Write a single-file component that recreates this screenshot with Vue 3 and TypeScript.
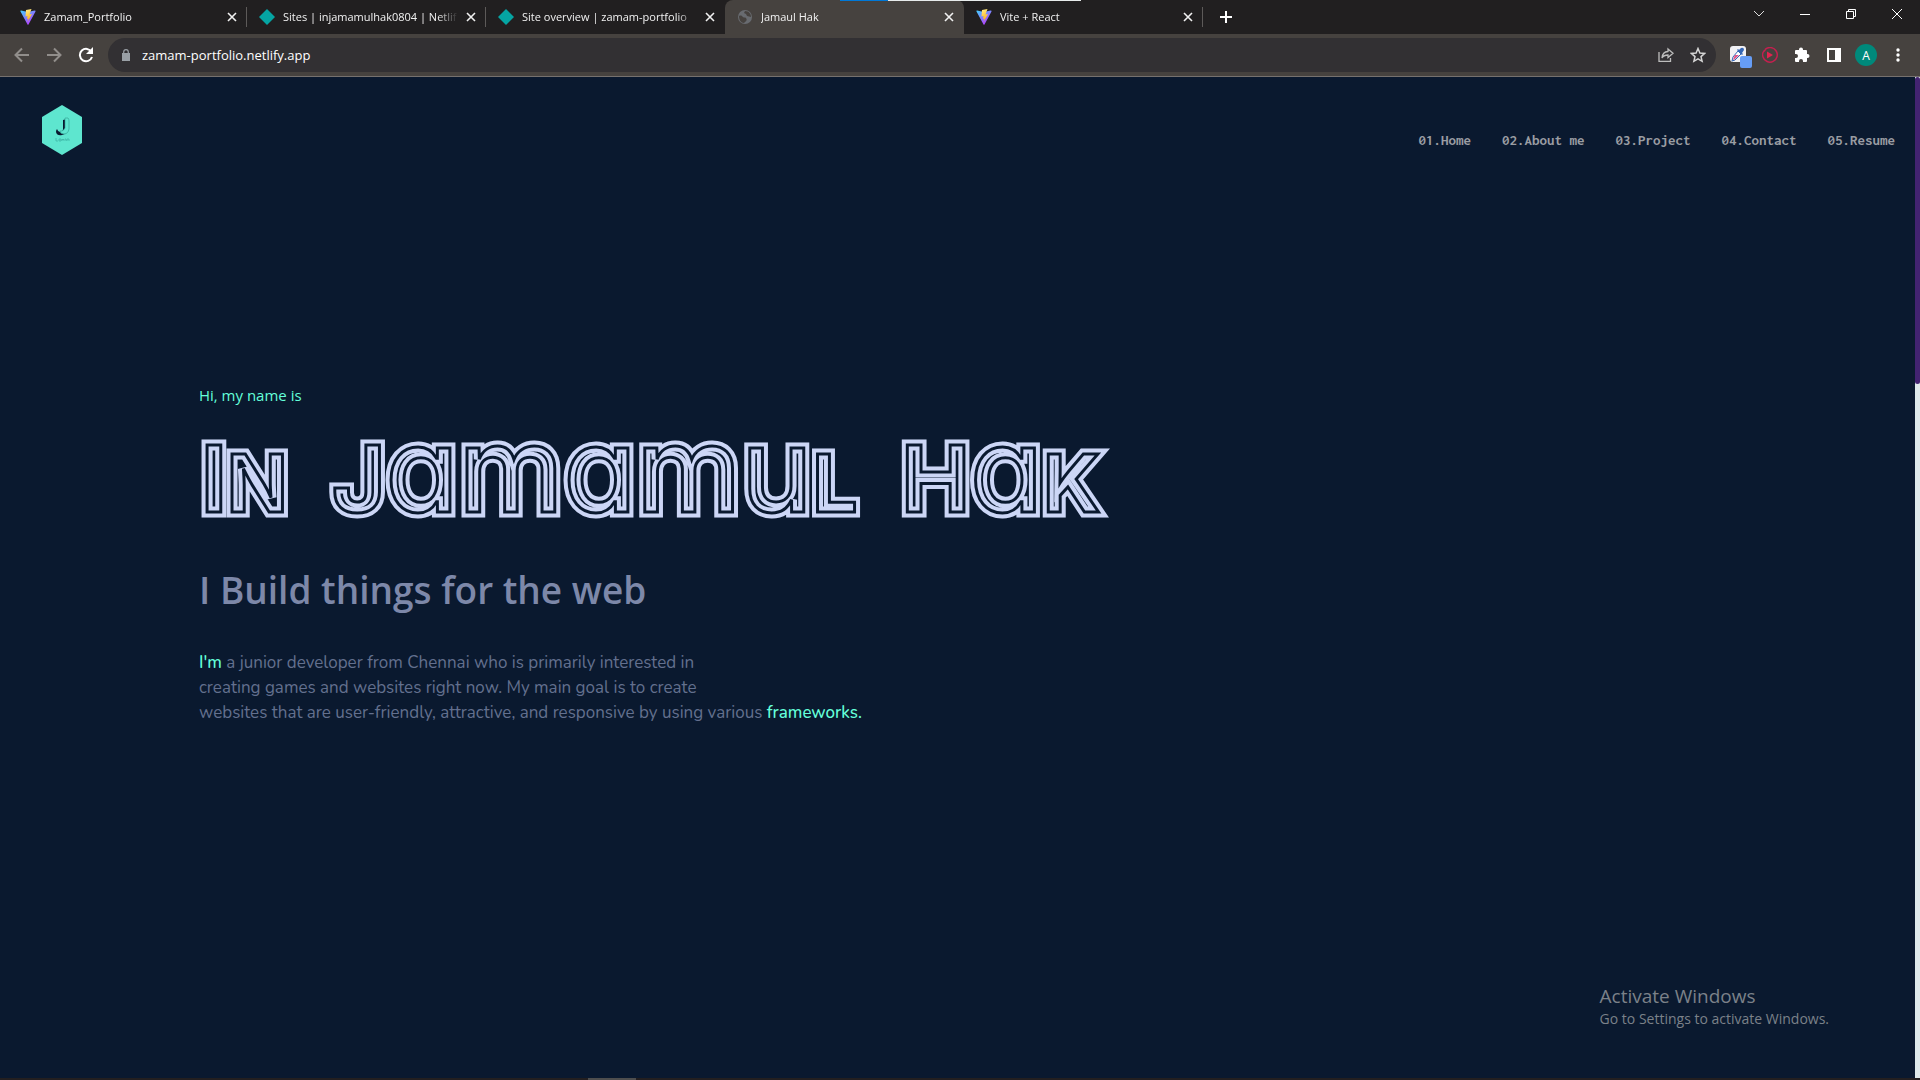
<script setup lang="ts">
interface Tab {
  title: string
  icon: 'vite' | 'netlify' | 'globe'
  active?: boolean
}

interface Letter {
  char: string
  kind: 'cap' | 'low' | 'small'
}

const tabs: Tab[] = [
  { title: 'Zamam_Portfolio', icon: 'vite' },
  { title: 'Sites | injamamulhak0804 | Netlif', icon: 'netlify' },
  { title: 'Site overview | zamam-portfolio', icon: 'netlify' },
  { title: 'Jamaul Hak', icon: 'globe', active: true },
  { title: 'Vite + React', icon: 'vite' },
]

const links: string[] = ['01.Home', '02.About me', '03.Project', '04.Contact', '05.Resume']

// n, l and k are set as small capitals, the first letter of each word as a capital
const words: Letter[][] = ['In', 'Jamamul', 'Hak'].map((word) =>
  [...word].map((char, i): Letter => ({
    char: 'nlk'.includes(char) ? char.toUpperCase() : char,
    kind: i === 0 ? 'cap' : 'nlk'.includes(char) ? 'small' : 'low',
  })),
)
</script>

<template>
  <div class="window">
    <div class="loading"></div>
    <div class="tabstrip">
      <div v-for="tab in tabs" :key="tab.title" class="tab" :class="{ active: tab.active }">
        <svg v-if="tab.icon === 'vite'" class="favicon" viewBox="0 0 32 32">
          <defs>
            <linearGradient id="vite-a" x1="0" y1="0" x2="0.7" y2="1">
              <stop offset="0" stop-color="#41d1ff" />
              <stop offset="1" stop-color="#bd34fe" />
            </linearGradient>
            <linearGradient id="vite-b" x1="0.4" y1="0" x2="0.6" y2="1">
              <stop offset="0" stop-color="#ffea83" />
              <stop offset="1" stop-color="#ffa800" />
            </linearGradient>
          </defs>
          <path d="M31 5 17 31q-1 1-2 0L1 5q-1-2 1-2l14 3 13-3q3 0 2 2z" fill="url(#vite-a)" />
          <path d="M23 0 12 2l-1 13 4-1-1 6 3-1-2 7 9-16-5 1z" fill="url(#vite-b)" />
        </svg>
        <svg v-else-if="tab.icon === 'netlify'" class="favicon" viewBox="0 0 16 16">
          <path d="M8 0 16 8 8 16 0 8z" fill="#05a5a3" />
        </svg>
        <svg v-else class="favicon" viewBox="0 0 16 16">
          <circle cx="8" cy="8" r="7" fill="#686b70" />
          <path d="M2 7c2-1 3 0 4 1s2 0 3 1 1 3-1 4l-1 1C4 14 2 11 2 7zM8 2l-1 2 2 1 1 2 4 1c0-3-2-6-6-6z" fill="#46423f" />
        </svg>
        <span class="tab-title">{{ tab.title }}</span>
        <button class="plain close" :aria-label="'Close ' + tab.title">
          <svg width="10" height="10" viewBox="0 0 10 10"><path d="M1 1l8 8M9 1 1 9" stroke="#f1f1f1" stroke-width="1.600" /></svg>
        </button>
      </div>
      <button class="plain new-tab" aria-label="New tab">
        <svg width="12" height="12" viewBox="0 0 12 12"><path d="M6 0v12M0 6h12" stroke="#fff" stroke-width="2" /></svg>
      </button>
      <div class="window-buttons">
        <button class="plain" aria-label="Search tabs">
          <svg width="12" height="12" viewBox="0 0 12 12"><path d="M1 3l5 5 5-5" fill="none" stroke="#ddd" /></svg>
        </button>
        <button class="plain" aria-label="Minimize">
          <svg width="12" height="12" viewBox="0 0 12 12"><path d="M1 6.500h10" stroke="#fff" /></svg>
        </button>
        <button class="plain" aria-label="Restore">
          <svg width="12" height="12" viewBox="0 0 12 12"><path d="M1.500 3.500h7v7h-7zM3.500 3V1.500h7v7H9" fill="none" stroke="#fff" /></svg>
        </button>
        <button class="plain" aria-label="Close window">
          <svg width="12" height="12" viewBox="0 0 12 12"><path d="M1 1l10 10M11 1 1 11" stroke="#fff" /></svg>
        </button>
      </div>
    </div>

    <div class="toolbar">
      <button class="plain tool" aria-label="Back">
        <svg width="16" height="16" viewBox="0 0 16 16"><path d="M15 8H2M8 1.500 1.500 8 8 14.500" fill="none" stroke="#918e8b" stroke-width="2" /></svg>
      </button>
      <button class="plain tool" aria-label="Forward">
        <svg width="16" height="16" viewBox="0 0 16 16"><path d="M1 8h13M8 1.500 14.500 8 8 14.500" fill="none" stroke="#918e8b" stroke-width="2" /></svg>
      </button>
      <button class="plain tool" aria-label="Reload">
        <svg width="16" height="16" viewBox="0 0 16 16">
          <path d="M13.500 5A6.200 6.200 0 1 0 14 10" fill="none" stroke="#fff" stroke-width="2" />
          <path d="M15 0v7H8z" fill="#fff" />
        </svg>
      </button>
      <div class="omnibox">
        <svg class="lock" width="8" height="12" viewBox="0 0 8 12">
          <path d="M0 4h8v8H0z" fill="#9aa0a6" />
          <path d="M1.700 5V3a2.300 2.300 0 0 1 4.600 0v2" fill="none" stroke="#9aa0a6" stroke-width="1.200" />
        </svg>
        <input class="address" type="text" aria-label="Address" value="zamam-portfolio.netlify.app" />
        <button class="plain tool" aria-label="Share">
          <svg width="16" height="16" viewBox="0 0 16 16" fill="none" stroke="#bdbdbd" stroke-width="1.300">
            <path d="M1 5v9.300h11.500V11" />
            <path d="M10 2l5 4.300-5 4.200V8C7 8 5 9 4 11c.3-4 2.500-6.300 6-6.500z" />
          </svg>
        </button>
        <button class="plain tool" aria-label="Bookmark this page">
          <svg width="16" height="16" viewBox="0 0 16 16">
            <path d="M8 1.500l1.900 4.500 4.800.4L11 9.600l1.100 4.700L8 11.800l-4.100 2.500L5 9.600 1.300 6.400l4.800-.4z" fill="none" stroke="#d5d5d5" stroke-width="1.500" />
          </svg>
        </button>
      </div>
      <div class="extensions">
        <button class="plain tool" aria-label="Color picker">
          <svg width="28" height="28" viewBox="-6 -5 28 28">
            <rect width="16" height="16" rx="3" fill="#f1f1f4" />
            <path d="M9 4l2-2q3-1 3 2l-2 3 1 1-1 1-5-5 1-1z" fill="#3567b5" />
            <path d="M8 5l3 3-6 6-3 1 1-4z" fill="#fff" stroke="#3567b5" />
            <path d="M5 9h4l-4 4-2 1 1-3z" fill="#e0568a" />
            <rect x="10" y="10" width="12" height="12" rx="2" fill="#669df6" />
          </svg>
        </button>
        <button class="plain tool" aria-label="Video player">
          <svg width="16" height="16" viewBox="0 0 16 16">
            <path d="M3 2.500A7.300 7.300 0 1 1 1 10C0 7 1 4 3.500 3" fill="none" stroke="#c4204f" stroke-width="1.500" />
            <path d="M5 4.500l6 3.500-6 3.500z" fill="#e2234f" />
          </svg>
        </button>
        <button class="plain tool" aria-label="Extensions">
          <svg width="16" height="16" viewBox="0 0 16 16">
            <path d="M1 4q0-1 1-1h3V2.500a2 2 0 0 1 4 0V3h3q1 0 1 1v3h.5a2 2 0 0 1 0 4H13v3q0 1-1 1H9v-1a2 2 0 0 0-4 0v1H2q-1 0-1-1v-3h1a2 2 0 0 0 0-4H1z" fill="#fff" />
          </svg>
        </button>
        <button class="plain tool" aria-label="Side panel">
          <svg width="16" height="16" viewBox="0 0 16 16"><path d="M1 1h14v14H1zM3 3v10h6V3z" fill="#fff" fill-rule="evenodd" /></svg>
        </button>
        <button class="plain tool avatar" aria-label="Profile">A</button>
        <button class="plain tool" aria-label="Menu">
          <svg width="16" height="16" viewBox="0 0 16 16" fill="#fff">
            <circle cx="8" cy="3" r="1.700" /><circle cx="8" cy="8" r="1.700" /><circle cx="8" cy="13" r="1.700" />
          </svg>
        </button>
      </div>
    </div>

    <div class="viewport">
      <div class="page">
        <header class="site-header">
          <a class="logo" href="#" aria-label="Home">
            <svg width="42" height="52" viewBox="0 0 42 52">
              <path d="M21 1 41 13v26L21 51 1 39V13z" fill="#5ee6cf" />
              <path d="M22 16v9q0 3-3 3-2 0-3-3-1 1-1 3 1 4 6 3 5-1 5-5V16q-2-1-4 0z" fill="#0a192f" />
              <path d="M24 14h3q1 1 1 3v8q-1 5-5 5-4 0-4-3h2q2-1 3-3z" fill="#5ee6cf" stroke="#2f9d91" stroke-width=".6" />
              <path d="M15 34v3h2M18 35h2v2h-2zM21 37v-2l1 1 1-1v2M24 35h1v2M26 37v-2h2v2" fill="none" stroke="#3bb0a2" stroke-width=".7" />
            </svg>
          </a>
          <nav class="nav">
            <a v-for="link in links" :key="link" href="#">{{ link }}</a>
          </nav>
        </header>
        <main class="hero">
          <p class="greeting">Hi, my name is</p>
          <h1 class="name">
            <span v-for="(word, w) in words" :key="w" class="word"><span
              v-for="(letter, i) in word"
              :key="i"
              class="letter"
              :class="letter.kind"
              :data-char="letter.char"
            >{{ letter.char }}</span></span>
          </h1>
          <h2 class="tagline">I Build things for the web</h2>
          <p class="intro">
            <b>I'm</b> a junior developer from Chennai who is primarily interested in<br />
            creating games and websites right now. My main goal is to create<br />
            websites that are user-friendly, attractive, and responsive by using various <b>frameworks.</b>
          </p>
        </main>
        <div class="activation">
          <p class="activation-title">Activate Windows</p>
          <p class="activation-text">Go to Settings to activate Windows.</p>
        </div>
      </div>
      <div class="scrollbar"><div class="thumb"></div></div>
    </div>
    <div class="taskbar"><div class="task"></div></div>
  </div>
</template>

<style>
body {
  margin: 0;
  background: #0a192f;
}
</style>

<style scoped>
.window {
  position: relative;
  display: flex;
  flex-direction: column;
  min-height: 100vh;
  font-family: "Segoe UI", "Open Sans", "Noto Sans", sans-serif;
}

.plain {
  display: flex;
  align-items: center;
  justify-content: center;
  padding: 0;
  border: 0;
  background: none;
  font-family: inherit;
}

.loading {
  position: absolute;
  z-index: 2;
  top: 0;
  left: 840px;
  width: 241px;
  height: 1px;
  background: linear-gradient(90deg, #0078d7 48px, #e8ecec 48px);
}

.tabstrip {
  display: flex;
  align-items: stretch;
  height: 34px;
  padding-left: 8px;
  background: #211f20;
}

.tab {
  position: relative;
  box-sizing: border-box;
  display: flex;
  flex: 0 1 239px;
  align-items: center;
  gap: 8px;
  min-width: 0;
  padding: 0 10px 0 12px;
  color: #f1f1f1;
  font-size: 11px;
}

.tab:not(.active)::after {
  content: "";
  position: absolute;
  top: 7px;
  right: 0;
  width: 1px;
  height: 20px;
  background: #5d5a59;
}

.tab:has(+ .active)::after {
  display: none;
}

.tab.active {
  border-radius: 8px 8px 0 0;
  background: #46423f;
}

.favicon {
  flex: none;
  width: 16px;
  height: 16px;
}

.tab-title {
  flex: 1;
  overflow: hidden;
  padding-bottom: 2px;
  white-space: nowrap;
  mask-image: linear-gradient(90deg, #000 calc(100% - 20px), transparent);
}

.close {
  width: 10px;
  height: 10px;
}

.new-tab {
  width: 28px;
  margin-left: 9px;
}

.window-buttons {
  display: flex;
  margin-left: auto;
  padding-bottom: 6px;
}

.window-buttons .plain {
  width: 46px;
}

.toolbar {
  display: flex;
  align-items: center;
  height: 42px;
  padding: 0 6px;
  border-bottom: 1px solid #76716e;
  background: #46423f;
}

.tool {
  flex: none;
  width: 32px;
  height: 32px;
}

.omnibox {
  display: flex;
  flex: 1;
  align-items: center;
  height: 34px;
  margin: 0 6px;
  padding: 0 2px 0 14px;
  border-radius: 17px;
  background: #323033;
}

.address {
  flex: 1;
  min-width: 0;
  margin-left: 12px;
  padding: 0;
  border: 0;
  outline: 0;
  background: none;
  color: #fff;
  font-family: inherit;
  font-size: 13px;
}

.extensions {
  display: flex;
  align-items: center;
}

.avatar {
  width: 22px;
  height: 22px;
  margin: 0 5px;
  border-radius: 50%;
  background: #00897b;
  color: #fff;
  font-size: 12px;
}

.viewport {
  display: flex;
  flex: 1;
  background: #0a192f;
}

.page {
  display: flex;
  flex: 1;
  flex-direction: column;
}

.site-header {
  display: flex;
  align-items: center;
  justify-content: space-between;
  padding: 27px 20px 0 41px;
}

.logo {
  height: 52px;
}

.nav {
  display: flex;
  gap: 31px;
  padding-top: 20px;
}

.nav a {
  color: #9a9da3;
  font-family: Inconsolata, "Liberation Mono", monospace;
  font-size: 15px;
  font-weight: 700;
  text-decoration: none;
}

.hero {
  padding: 227px 20px 0 199px;
}

.greeting {
  margin: 0;
  color: #64ffda;
  font-size: 15px;
  line-height: 24px;
}

.name {
  display: flex;
  align-items: baseline;
  gap: 44px;
  margin: 0;
  padding: 2px 0 0 2px;
  font-family: Inter, sans-serif;
  line-height: 120px;
}

.word {
  display: flex;
  align-items: baseline;
}

/* Each letter is two parallel contours: a wide light stroke split by a narrow dark one */
.letter {
  position: relative;
  color: #0a192f;
  font-feature-settings: "cv11";
  -webkit-text-stroke: 11px #ccd6f6;
}

.letter::after {
  content: attr(data-char);
  position: absolute;
  top: 0;
  left: 0;
  color: transparent;
  -webkit-text-stroke: 3px #0a192f;
}

.cap {
  font-size: 92px;
  font-weight: 700;
}

.low {
  font-size: 118px;
  font-weight: 500;
}

.small {
  font-size: 80px;
  font-weight: 700;
}

.tagline {
  margin: 0;
  padding-top: 19px;
  color: #7d88a9;
  font-size: 37px;
  font-weight: 600;
  line-height: 56px;
}

.intro {
  margin: 0;
  padding-top: 32px;
  color: #63708e;
  font-family: Nunito, "Noto Sans", sans-serif;
  font-size: 17px;
  line-height: 25px;
}

.intro b {
  color: #64ffda;
  font-weight: 500;
}

.activation {
  align-self: flex-end;
  margin-top: auto;
  padding: 0 86px 49px 0;
  color: #7b8189;
}

.activation p {
  margin: 0;
}

.activation-title {
  font-size: 19px;
  line-height: 26px;
}

.activation-text {
  font-size: 14px;
  line-height: 20px;
}

.scrollbar {
  width: 5px;
  background: #dfe9eb;
}

.thumb {
  height: 307px;
  border-radius: 3px;
  background: #432371;
}

.taskbar {
  height: 2px;
  background: #231f20;
}

.task {
  width: 48px;
  height: 2px;
  margin-left: 588px;
  background: #4e4e4e;
}
</style>
